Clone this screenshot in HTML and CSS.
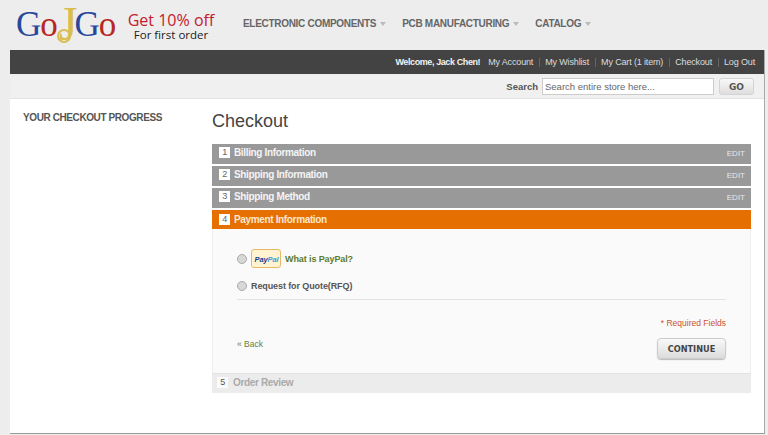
FILE: index.html
```html
<!DOCTYPE html>
<html lang="en">
<head>
<meta charset="utf-8">
<title>Checkout</title>
<link rel="stylesheet" href="styles.css">
</head>
<body>
<header class="header">
  <a class="logo"><span class="blue">G</span><span class="red">o</span><span class="j">J</span><span class="blue">G</span><span class="red">o</span></a>
  <div class="promo"><div class="promo-big">Get 10% off</div><div class="promo-small">For first order</div></div>
  <nav class="nav">
    <a>ELECTRONIC COMPONENTS<i class="caret"></i></a>
    <a>PCB MANUFACTURING<i class="caret"></i></a>
    <a>CATALOG<i class="caret"></i></a>
  </nav>
</header>
<div class="page">
  <div class="topbar">
    <strong class="welcome">Welcome, Jack Chen!</strong>
    <a>My Account</a><a>My Wishlist</a><a>My Cart (1 item)</a><a>Checkout</a><a class="last">Log Out</a>
  </div>
  <div class="searchbar">
    <label class="search-label">Search</label>
    <input class="search-input" type="text" placeholder="Search entire store here...">
    <button class="go">GO</button>
  </div>
  <main class="main">
    <aside class="side"><h3>YOUR CHECKOUT PROGRESS</h3></aside>
    <section class="content">
      <h1>Checkout</h1>
      <div class="step done"><span class="num">1</span><span class="title">Billing Information</span><a class="edit">EDIT</a></div>
      <div class="step done"><span class="num">2</span><span class="title">Shipping Information</span><a class="edit">EDIT</a></div>
      <div class="step done"><span class="num">3</span><span class="title">Shipping Method</span><a class="edit">EDIT</a></div>
      <div class="step active"><span class="num">4</span><span class="title">Payment Information</span></div>
      <div class="panel">
        <div class="option first">
          <i class="radio"></i>
          <svg class="paypal" width="30" height="19" viewBox="0 0 30 19"><rect x="0.5" y="0.5" width="29" height="18" rx="2.5" fill="#fff3d2" stroke="#e8b768"/><text x="3.5" y="12.5" class="pp-a">Pay<tspan class="pp-b">Pal</tspan></text></svg>
          <a class="what">What is PayPal?</a>
        </div>
        <div class="option second"><i class="radio"></i><span class="opt-label">Request for Quote(RFQ)</span></div>
        <div class="required">* Required Fields</div>
        <div class="actions">
          <a class="back">« Back</a>
          <button class="continue">CONTINUE</button>
        </div>
      </div>
      <div class="step pending"><span class="num">5</span><span class="title">Order Review</span></div>
    </section>
  </main>
</div>
</body>
</html>
```
FILE: styles.css
```css
* { box-sizing: border-box; }
html, body { margin: 0; height: 435px; overflow: hidden; }
body { background: #ededed; font-family: "Liberation Sans", Arial, sans-serif; color: #444; }

.header { height: 50px; display: flex; align-items: flex-start; padding-left: 16px; }
.logo { font-family: "Liberation Serif", serif; font-size: 35px; line-height: 35px; letter-spacing: -1px; margin-top: 7px; width: 98px; white-space: nowrap; display: flex; }
.blue { color: #27479c; }
.red { color: #b8281f; }
.j { color: #d9bd4e; font-size: 48px; line-height: 48px; margin: -7px -2px 0 2px; position: relative; }
.j::after { content: ""; position: absolute; left: -2px; top: 29px; width: 10px; height: 10px; border: 2px solid #d9bd4e; border-radius: 50%; }
.promo { margin-left: 11px; width: 92px; text-align: center; font-family: "Open Sans", sans-serif; }
.promo-big { color: #c4202b; font-size: 16px; line-height: 15px; margin-top: 13px; white-space: nowrap; }
.promo-small { color: #222; font-size: 11.5px; line-height: 11px; margin-top: 1px; white-space: nowrap; }
.nav { display: flex; margin-left: 26px; margin-top: 17px; gap: 16px; }
.nav a { font-size: 10px; letter-spacing: -0.3px; font-weight: bold; color: #666; line-height: 13px; white-space: nowrap; }
.caret { display: inline-block; border: 3px solid transparent; border-top: 4px solid #bbb; border-bottom: 0; margin-left: 4px; vertical-align: 1px; }

.page { margin: 0 3px 0 10px; height: 384px; display: flex; flex-direction: column; border-right: 1px solid #aaa; border-bottom: 1px solid #999; }
.topbar { height: 24px; background: #434343; display: flex; align-items: center; justify-content: flex-end; padding-right: 9px; font-size: 9px; letter-spacing: -0.15px; color: #ddd; white-space: nowrap; }
.welcome { color: #f2f2f2; margin-right: 3px; font-size: 9px; letter-spacing: -0.4px; }
.topbar a { padding: 0 6px 0 5px; border-right: 1px solid #666; line-height: 9px; }
.topbar a.last { border-right: 0; padding-right: 0; }
.searchbar { height: 24px; margin-top: 1px; background: #f0f0f0; border-bottom: 1px solid #e2e2e2; display: flex; align-items: center; justify-content: flex-end; padding-right: 10px; }
.search-label { font-size: 9.5px; font-weight: bold; color: #555; margin-right: 4px; }
.search-input { width: 172px; height: 17px; border: 1px solid #ccc; background: #fff; font: 9.5px "Liberation Sans", sans-serif; padding: 0 2px; margin-right: 5px; }
.search-input::placeholder { color: #666; opacity: 1; }
.go { width: 35px; height: 17px; border: 1px solid #d4d4d4; border-radius: 3px; background: linear-gradient(#f8f8f8, #dedede); font: bold 9px "DejaVu Sans", sans-serif; color: #555; padding: 0; }

.main { flex: 1; background: #fff; display: flex; min-height: 0; }
.side { width: 202px; padding: 13px 0 0 13px; }
.side h3 { margin: 0; font-size: 10px; letter-spacing: -0.4px; line-height: 12px; font-weight: bold; color: #555; white-space: nowrap; }
.content { width: 539px; }
.content h1 { margin: 11px 0 11px; font-size: 18px; line-height: 23px; font-weight: normal; color: #444; }

.step { display: flex; align-items: center; height: 20px; padding: 0 0 3px 7px; font-size: 10px; letter-spacing: -0.35px; font-weight: bold; margin-bottom: 2px; }
.num { width: 11px; height: 11px; background: #fff; color: #666; font-size: 9px; line-height: 11px; text-align: center; margin-right: 4px; font-weight: normal; }
.done { background: #999; color: #f4f4f4; }
.active { background: #e56f00; color: #f8efe4; margin-bottom: 0; height: 19px; padding-bottom: 1px; }
.active .title { color: #fbe7d0; }
.edit { margin: 2px 6px 0 auto; font-size: 8px; letter-spacing: 0; font-weight: normal; color: #e8e8e8; }
.title { flex: none; }

.panel { height: 144px; background: #fafafa; border-left: 1px solid #eee; border-right: 1px solid #eee; padding: 0 24px; display: flex; flex-direction: column; }
.option { display: flex; align-items: center; font-size: 9px; letter-spacing: -0.1px; font-weight: bold; }
.option.first { margin-top: 20px; height: 19px; }
.option.second { margin-top: 11px; height: 14px; }
.radio { width: 10px; height: 10px; border-radius: 50%; background: #d8d8d8; border: 1px solid #aaa; margin-right: 4px; }
.paypal { display: block; margin-right: 4px; }
.pp-a { font: italic bold 7.5px "Liberation Sans", sans-serif; fill: #1c3f8f; }
.pp-b { fill: #3f9ad6; }
.what { color: #5c7a2c; }
.opt-label { color: #555; }
.required { margin-top: 6px; padding-top: 18px; border-top: 1px solid #e3e3e3; text-align: right; font-size: 8.5px; line-height: 10px; color: #c7522f; }
.actions { display: flex; justify-content: space-between; align-items: flex-start; margin-top: 10px; }
.back { font-size: 8.5px; color: #6a7f3c; margin-top: 1px; line-height: 11px; }
.continue { width: 69px; height: 21px; border: 1px solid #ccc; border-radius: 4px; background: linear-gradient(#f9f9f9, #dcdcdc); font: bold 8.2px "DejaVu Sans", sans-serif; color: #444; padding: 0; box-shadow: 0 1px 1px #bbb; }
.pending { background: #ececec; color: #aaa; border-top: 1px solid #e2e2e2; margin-bottom: 0; padding-left: 5px; }
.pending .num { background: #fbfbfb; color: #555; margin-right: 5px; }
```
